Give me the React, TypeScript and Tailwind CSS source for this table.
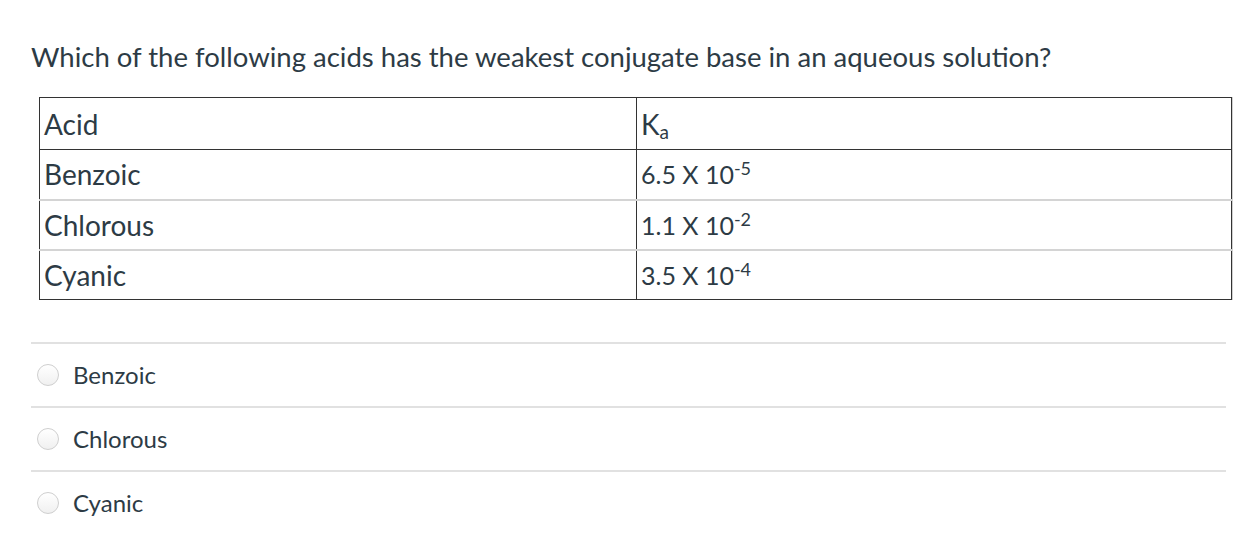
const rows = [
  { acid: "Benzoic", base: "6.5 X 10", exp: "-5" },
  { acid: "Chlorous", base: "1.1 X 10", exp: "-2" },
  { acid: "Cyanic", base: "3.5 X 10", exp: "-4" },
];

const answers = ["Benzoic", "Chlorous", "Cyanic"];

function Radio() {
  return (
    <span className="inline-block h-[22px] w-[22px] shrink-0 rounded-full border border-[#cfcfcf] bg-gradient-to-b from-white to-[#f0f0f0]" />
  );
}

export default function App() {
  return (
    <div className="min-h-[552px] bg-white text-[#2d3b45]" style={{ fontFamily: "Lato, 'Noto Sans', sans-serif" }}>
      <div className="pl-[31px] pr-[22px] pt-[40px]">
        <p className="text-[27.5px] leading-[34px]">
          Which of the following acids has the weakest conjugate base in an aqueous solution?
        </p>

        {/* Ka table */}
        <div className="mt-[23px] ml-[8px] mr-[-7px] border-r border-[#d0d0d0]">
          <table className="w-full border-collapse border border-[#333] text-[28px]">
            <tbody>
              <tr className="h-[52px] border-b border-[#333]">
                <td className="w-[597px] border-r border-[#333] px-[4px] align-middle leading-[40px]">Acid</td>
                <td className="px-[4px] align-middle leading-[40px]">
                  K<sub className="text-[19px]">a</sub>
                </td>
              </tr>
              {rows.map((r, i) => (
                <tr
                  key={r.acid}
                  className={`h-[50px] ${i < rows.length - 1 ? "border-b-2 border-[#d4d4d4]" : ""}`}
                >
                  <td className="border-r border-[#333] px-[4px] align-middle leading-[40px]">{r.acid}</td>
                  <td className="px-[4px] align-middle leading-[40px] text-[25px]">
                    {r.base}
                    <sup className="text-[18px]">{r.exp}</sup>
                  </td>
                </tr>
              ))}
            </tbody>
          </table>
        </div>

        {/* answers */}
        <div className="mt-[42px]">
          {answers.map((a) => (
            <div key={a} className="flex h-[64px] items-center gap-[14px] border-t-2 border-[#e1e1e1] pl-[6px]">
              <Radio />
              <span className="text-[24px]">{a}</span>
            </div>
          ))}
        </div>
      </div>
    </div>
  );
}
